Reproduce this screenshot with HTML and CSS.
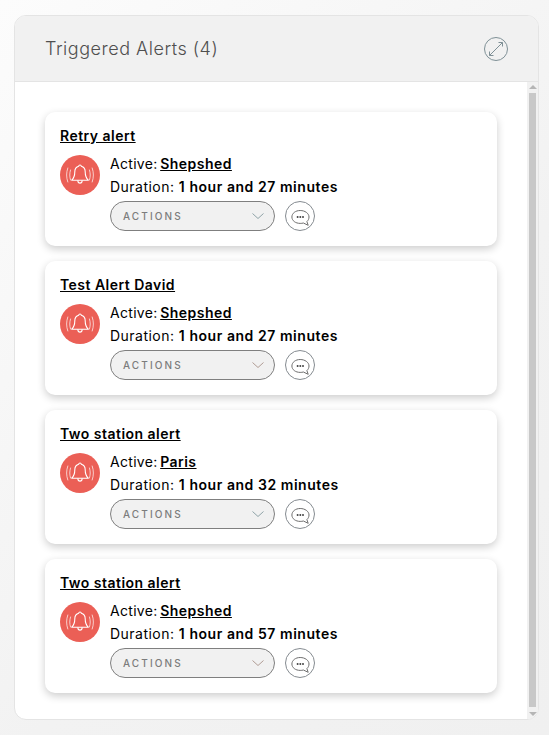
FILE: index.html
```html
<!DOCTYPE html>
<html lang="en">
<head>
<meta charset="utf-8">
<title>Triggered Alerts</title>
<link rel="stylesheet" href="styles.css">
</head>
<body>
<svg class="defs" width="0" height="0" aria-hidden="true">
  <symbol id="bell" viewBox="0 0 36 36">
    <path d="M18 8c-.8 0-1.300.5-1.300 1.200-2.500.7-3.900 2.800-3.900 5.500 0 4.100-1 6.600-3.100 8.500h16.600c-2.100-1.900-3.100-4.400-3.100-8.500 0-2.700-1.400-4.800-3.900-5.500 0-.7-.5-1.200-1.300-1.200z" fill="none" stroke="#fff" stroke-width="1.100" stroke-linejoin="round"/>
    <path d="M15.800 23.400c.1 1.700 1 2.700 2.200 2.700s2.100-1 2.200-2.700" fill="none" stroke="#fff" stroke-width="1.100"/>
    <path d="M5.800 11c-1.600 4.600-1.600 9.400 0 14M8.500 13c-1 3.400-1 6.600 0 10M30.200 11c1.600 4.600 1.600 9.400 0 14M27.500 13c1 3.400 1 6.600 0 10" fill="none" stroke="#fff" stroke-opacity=".7" stroke-width="1" stroke-linecap="round"/>
  </symbol>
  <symbol id="chat" viewBox="0 0 30 30">
    <circle cx="15" cy="15" r="14.500" fill="#fff" stroke="#858b90"/>
    <path d="M15.200 9.500c-4.700 0-8.300 2.800-8.300 6.500s3.600 6.400 8.300 6.400c1.100 0 2.200-.1 3.200-.4l4.800 2.300-1.300-3.700c1.300-1.200 2.100-2.800 2.100-4.600 0-3.700-4.100-6.500-8.800-6.500z" fill="none" stroke="#6e6e6e" stroke-width="1" stroke-linejoin="round"/>
    <circle cx="12.600" cy="16" r="1" fill="#444"/>
    <circle cx="15.300" cy="16" r="1" fill="#444"/>
    <circle cx="18" cy="16" r="1" fill="#444"/>
  </symbol>
</svg>
<section class="panel">
  <header class="panel-head">
    <h1 class="panel-title">Triggered Alerts (4)</h1>
    <button class="expand" aria-label="Expand">
      <svg viewBox="0 0 24 24" width="24" height="24">
        <circle cx="12" cy="12" r="11.500" fill="none" stroke="#7f9096"/>
        <path d="M5.500 18.500 18.500 5.500M14.500 5.500h4v4M5.500 14.500v4h4" fill="none" stroke="#7f9096"/>
      </svg>
    </button>
  </header>
  <div class="panel-body">
    <div class="alerts">
      <article class="alert">
        <a class="alert-name" href="#">Retry alert</a>
        <div class="alert-main">
          <svg class="bell"><use href="#bell"/></svg>
          <div class="alert-info">
            <div class="line line-active">Active: <a href="#">Shepshed</a></div>
            <div class="line">Duration: <b>1 hour and 27 minutes</b></div>
            <div class="controls">
              <div class="select"><span>ACTIONS</span><svg class="chev" viewBox="0 0 12 6"><path d="M.5.500 6 5.500 11.500.5" fill="none" stroke="#8fa3a8"/></svg></div>
              <svg class="chat"><use href="#chat"/></svg>
            </div>
          </div>
        </div>
      </article>
      <article class="alert">
        <a class="alert-name" href="#">Test Alert David</a>
        <div class="alert-main">
          <svg class="bell"><use href="#bell"/></svg>
          <div class="alert-info">
            <div class="line line-active">Active: <a href="#">Shepshed</a></div>
            <div class="line">Duration: <b>1 hour and 27 minutes</b></div>
            <div class="controls">
              <div class="select"><span>ACTIONS</span><svg class="chev" viewBox="0 0 12 6"><path d="M.5.500 6 5.500 11.500.5" fill="none" stroke="#b09c94"/></svg></div>
              <svg class="chat"><use href="#chat"/></svg>
            </div>
          </div>
        </div>
      </article>
      <article class="alert">
        <a class="alert-name" href="#">Two station alert</a>
        <div class="alert-main">
          <svg class="bell"><use href="#bell"/></svg>
          <div class="alert-info">
            <div class="line line-active">Active: <a href="#">Paris</a></div>
            <div class="line">Duration: <b>1 hour and 32 minutes</b></div>
            <div class="controls">
              <div class="select"><span>ACTIONS</span><svg class="chev" viewBox="0 0 12 6"><path d="M.5.500 6 5.500 11.500.5" fill="none" stroke="#8fa3a8"/></svg></div>
              <svg class="chat"><use href="#chat"/></svg>
            </div>
          </div>
        </div>
      </article>
      <article class="alert">
        <a class="alert-name" href="#">Two station alert</a>
        <div class="alert-main">
          <svg class="bell"><use href="#bell"/></svg>
          <div class="alert-info">
            <div class="line line-active">Active: <a href="#">Shepshed</a></div>
            <div class="line">Duration: <b>1 hour and 57 minutes</b></div>
            <div class="controls">
              <div class="select"><span>ACTIONS</span><svg class="chev" viewBox="0 0 12 6"><path d="M.5.500 6 5.500 11.500.5" fill="none" stroke="#b09c94"/></svg></div>
              <svg class="chat"><use href="#chat"/></svg>
            </div>
          </div>
        </div>
      </article>
    </div>
    <div class="scrollbar" aria-hidden="true">
      <span class="arrow-up"></span>
      <span class="thumb"></span>
      <span class="arrow-down"></span>
    </div>
  </div>
</section>
</body>
</html>
```
FILE: styles.css
```css
* { box-sizing: border-box; }
html, body { height: 100%; }
body {
  margin: 0;
  padding: 15px 10px 15px 14px;
  background: linear-gradient(135deg, #fcfcfc 0%, #f2f2f2 60%, #f0f0f0 100%);
  font-family: Inter, "Open Sans", "Liberation Sans", sans-serif;
  color: #000;
  overflow: hidden;
}
.defs { position: absolute; }
.panel {
  width: 525px;
  height: 705px;
  display: flex;
  flex-direction: column;
  border: 1px solid #e4e4e4;
  border-radius: 12px;
  background: #fff;
  overflow: hidden;
}
.panel-head {
  height: 66px;
  flex: none;
  display: flex;
  align-items: center;
  justify-content: space-between;
  padding: 0 30px;
  background: #f1f1f1;
  border-bottom: 1px solid #e4e4e4;
}
.panel-title {
  margin: 0;
  font-size: 18px;
  font-weight: 300;
  color: #4f4f4f;
  letter-spacing: 0.52px;
}
.expand {
  width: 24px;
  height: 24px;
  padding: 0;
  border: 0;
  background: none;
  display: block;
}
.expand svg { display: block; }
.panel-body {
  flex: 1;
  min-height: 0;
  display: flex;
  justify-content: space-between;
  padding-left: 30px;
}
.alerts {
  width: 452px;
  padding-top: 30px;
  display: flex;
  flex-direction: column;
  gap: 15px;
}
.alert {
  height: 134px;
  padding: 14px 15px 0;
  background: #fff;
  border-radius: 10px;
  box-shadow: 0 3px 9px rgba(0, 0, 0, 0.2);
}
.alert-name {
  display: block;
  font-size: 14px;
  line-height: 19px;
  font-weight: 600;
  letter-spacing: 0.47px;
  color: #000;
  text-decoration: underline;
}
.alert-main {
  display: flex;
  gap: 10px;
  margin-top: 7px;
}
.bell {
  flex: none;
  width: 40px;
  height: 40px;
  margin-top: 3px;
  border-radius: 50%;
  background: #eb5f56;
  padding: 2px;
}
.alert-info { flex: 1; }
.line {
  font-size: 14px;
  line-height: 23px;
  font-weight: 400;
  letter-spacing: 0.47px;
  white-space: nowrap;
}
.line-active { letter-spacing: 0.3px; word-spacing: -1.6px; }
.line a { font-weight: 600; letter-spacing: 0.47px; color: #000; text-decoration: underline; }
.line b { font-weight: 600; letter-spacing: 0.55px; }
.controls {
  display: flex;
  align-items: center;
  gap: 10px;
  margin-top: 3px;
}
.select {
  width: 165px;
  height: 30px;
  display: flex;
  align-items: center;
  justify-content: space-between;
  padding: 0 10px 0 12px;
  background: #f1f1f1;
  border: 1px solid #7f7f7f;
  border-radius: 15px;
  font-size: 10px;
  font-weight: 500;
  letter-spacing: 2.1px;
  color: #7c7c7c;
}
.chev { width: 12px; height: 6px; display: block; }
.chat { width: 30px; height: 30px; display: block; flex: none; }
.scrollbar {
  width: 11px;
  flex: none;
  display: flex;
  flex-direction: column;
  align-items: center;
  background: #f1f1f1;
  padding: 3px 0;
}
.arrow-up, .arrow-down {
  flex: none;
  width: 0;
  height: 0;
  border-left: 4px solid transparent;
  border-right: 4px solid transparent;
}
.arrow-up { border-bottom: 4px solid #b5b5b5; margin-bottom: 4px; }
.arrow-down { border-top: 4px solid #b5b5b5; margin-top: 5px; }
.thumb { flex: 1; width: 7px; background: #c8c8c8; }
```
